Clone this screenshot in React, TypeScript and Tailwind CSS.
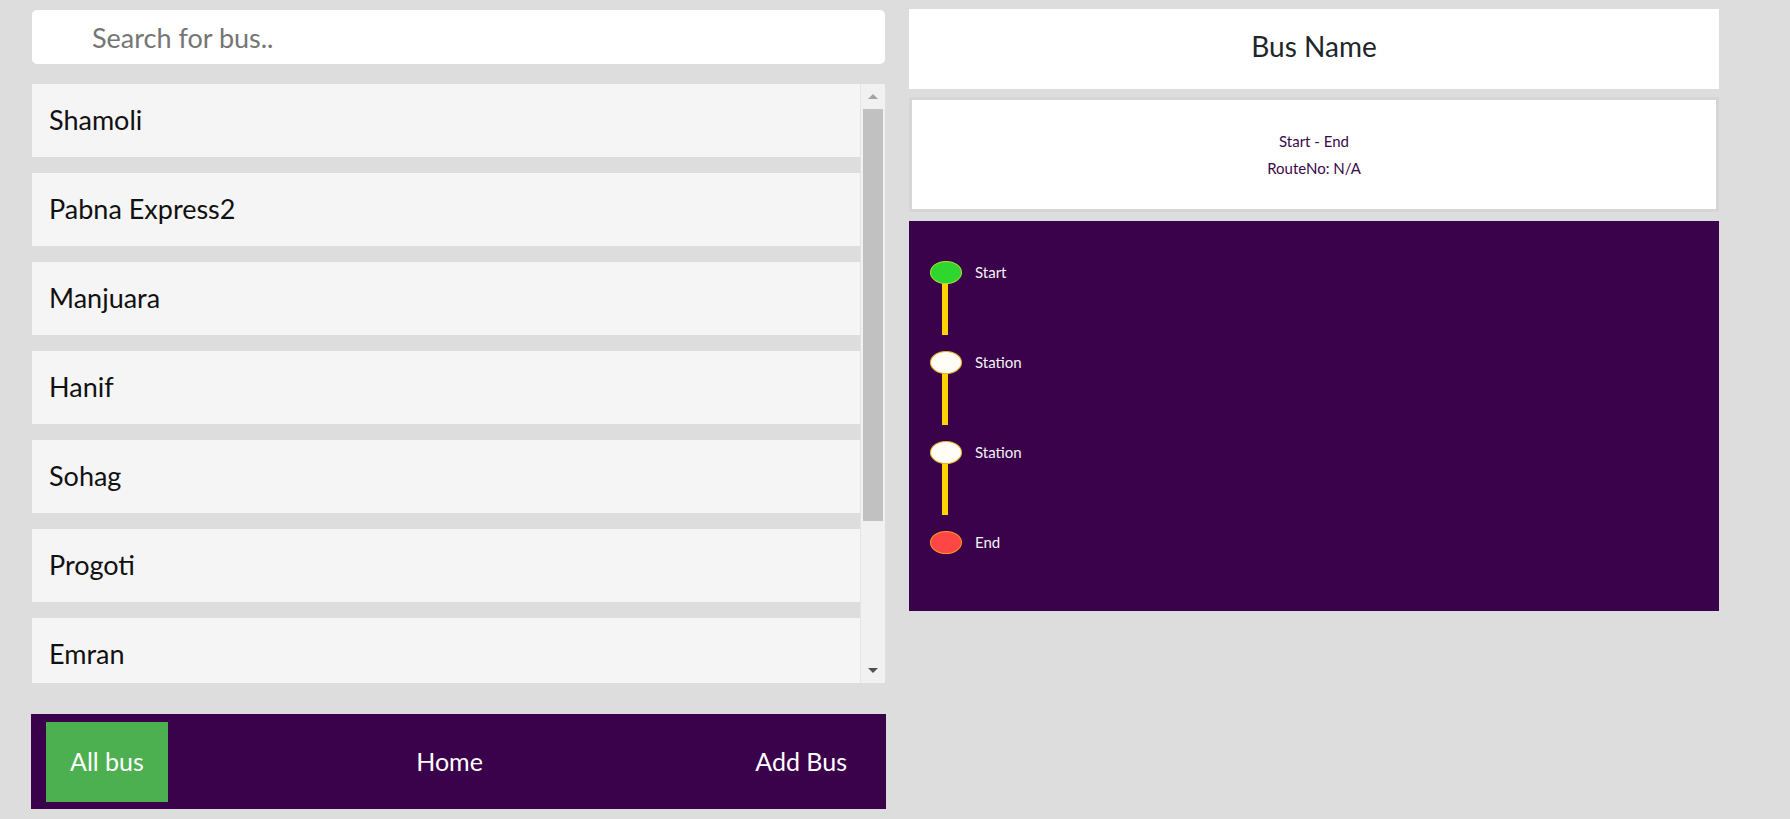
const buses = ["Shamoli", "Pabna Express2", "Manjuara", "Hanif", "Sohag", "Progoti", "Emran"];

const stops = [
  { name: "Start", dot: "bg-[#2ed62e] border-[#a8e03a]" },
  { name: "Station", dot: "bg-[#fffdf5] border-[#e8b424]" },
  { name: "Station", dot: "bg-[#fffdf5] border-[#e8b424]" },
  { name: "End", dot: "bg-[#ff4646] border-[#ff9a1f]" },
];

function BusList() {
  return (
    <div className="mt-[20px] h-[599px] flex">
      <div className="flex-1 overflow-hidden flex flex-col gap-[16px]">
        {buses.map((b) => (
          <div
            key={b}
            className="h-[73px] shrink-0 bg-[#f5f5f5] pl-[17px] flex items-center text-[27px] text-[#111111]"
          >
            {b}
          </div>
        ))}
      </div>
      {/* scrollbar */}
      <div className="w-[25px] bg-[#f1f1f1] border-l border-[#e4e4e4] flex flex-col">
        <div className="h-[25px] flex items-center justify-center">
          <div className="w-0 h-0 border-l-[5px] border-r-[5px] border-b-[5px] border-l-transparent border-r-transparent border-b-[#a3a3a3]" />
        </div>
        <div className="h-[412px] mx-[2px] bg-[#c1c1c1]" />
        <div className="flex-1" />
        <div className="h-[25px] flex items-center justify-center">
          <div className="w-0 h-0 border-l-[5px] border-r-[5px] border-t-[5px] border-l-transparent border-r-transparent border-t-[#505050]" />
        </div>
      </div>
    </div>
  );
}

function NavBar() {
  return (
    <div className="mt-[31px] -mx-px h-[95px] bg-[#39024a] px-[15px] flex items-center justify-between text-[25px] text-white">
      <a className="h-[80px] px-[24px] bg-[#4caf50] flex items-center">All bus</a>
      <a className="px-[24px]">Home</a>
      <a className="px-[24px]">Add Bus</a>
    </div>
  );
}

function Route() {
  return (
    <div className="mt-[9px] h-[390px] bg-[#39024a] pt-[40px] pl-[21px]">
      {stops.map((s, i) => (
        <div key={i} className="h-[90px]">
          <div className="flex items-center gap-[13px] h-[23px]">
            <div className={`w-[32px] h-[23px] rounded-[50%] border ${s.dot}`} />
            <span className="text-[15px] text-[#f7f2f7]">{s.name}</span>
          </div>
          {i < stops.length - 1 && <div className="ml-[12px] w-[6px] h-[51px] bg-[#ffd200]" />}
        </div>
      ))}
    </div>
  );
}

export default function App() {
  return (
    <div className="min-h-screen bg-[#dddddd] flex gap-[24px] pl-[32px] pt-[9px] font-['Lato',sans-serif]">
      <div className="w-[853px] flex flex-col">
        <input
          placeholder="Search for bus.."
          className="mt-px h-[54px] rounded-[5px] bg-white pl-[60px] text-[27px] text-[#333] placeholder:text-[#757575] outline-none"
        />
        <BusList />
        <NavBar />
      </div>

      <div className="w-[810px] flex flex-col">
        <div className="h-[80px] pb-[6px] bg-white flex items-center justify-center text-[28px] text-[#212529]">
          Bus Name
        </div>
        <div className="mt-[8px] h-[115px] border-[3px] border-[#d6d6d6] bg-white flex flex-col items-center justify-center text-[15px] leading-[27px] text-[#3a0a4a]">
          <p>Start - End</p>
          <p>RouteNo: N/A</p>
        </div>
        <Route />
      </div>
    </div>
  );
}
